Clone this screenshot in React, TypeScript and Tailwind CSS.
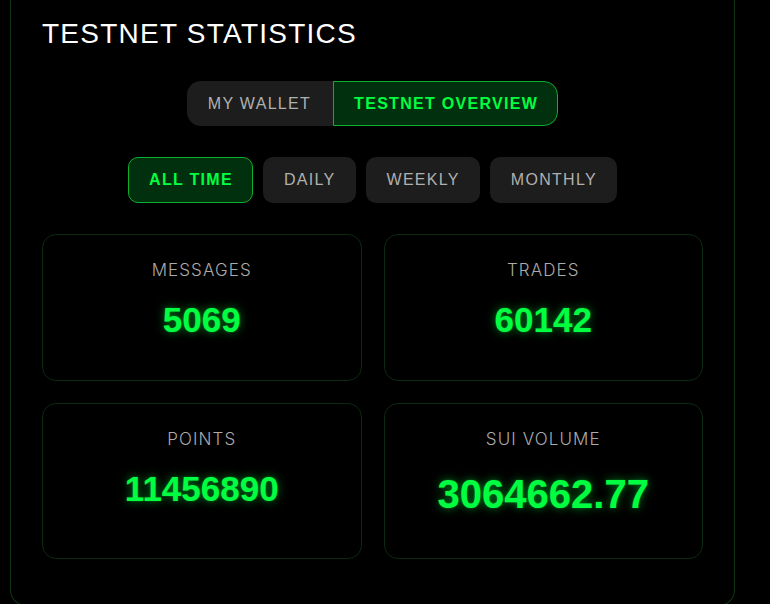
import React from "react";

const glow = { textShadow: "0 0 10px rgba(0,255,65,0.5), 0 0 2px rgba(0,255,65,0.35)" };

function Card({ label, value, big }: { label: string; value: string; big?: boolean }) {
  return (
    <div className="flex flex-col items-center rounded-[14px] border border-[#0b2a11] bg-black pt-[23px] pb-[39px]">
      <div className="text-[17px] leading-[24px] font-light tracking-[1.1px] text-[#ababab] [font-family:Inter,'Noto_Sans',sans-serif]">
        {label}
      </div>
      <div
        className={
          "font-bold text-[#00ff41] [font-family:'Liberation_Sans',Arial,sans-serif] " +
          (big ? "mt-[18px] text-[40px] leading-[50px]" : "mt-[17px] text-[35px] leading-[42px]")
        }
        style={glow}
      >
        {value}
      </div>
    </div>
  );
}

export default function App() {
  return (
    <div className="min-h-[604px] w-[770px] bg-black [font-family:'Liberation_Sans',Arial,sans-serif]">
      <div className="ml-[10px] w-[725px] rounded-b-[16px] border border-t-0 border-[#0d3514] bg-black px-[31px] pt-[17px] pb-[46px]">
        <h1 className="text-[28px] leading-[34px] tracking-[1.25px] text-white">TESTNET STATISTICS</h1>

        <div className="mt-[30px] flex justify-center">
          <div className="flex h-[45px] overflow-hidden rounded-[14px] bg-[#1c1d1c]">
            <button className="flex items-center pl-[21px] pr-[22px] text-[16px] tracking-[1.3px] text-[#b0b0b0]">
              MY WALLET
            </button>
            <button className="flex items-center rounded-r-[14px] border border-[#0fae2c] bg-[#00300d] pl-[20px] pr-[19px] text-[16px] font-bold tracking-[1.3px] text-[#00ff41]">
              TESTNET OVERVIEW
            </button>
          </div>
        </div>

        <div className="mt-[31px] flex justify-center gap-[10px]">
          <button className="flex h-[46px] items-center rounded-[10px] border border-[#0fae2c] bg-[#00300d] pl-[20px] pr-[19px] text-[16px] font-bold tracking-[1.3px] text-[#00ff41]">
            ALL TIME
          </button>
          {["DAILY", "WEEKLY", "MONTHLY"].map((t) => (
            <button
              key={t}
              className="flex h-[46px] items-center rounded-[10px] bg-[#1c1d1c] pl-[21px] pr-[20px] text-[16px] tracking-[1.3px] text-[#b0b0b0]"
            >
              {t}
            </button>
          ))}
        </div>

        <div className="mt-[31px] grid grid-cols-2 gap-[22px]">
          <Card label="MESSAGES" value="5069" />
          <Card label="TRADES" value="60142" />
          <Card label="POINTS" value="11456890" />
          <Card label="SUI VOLUME" value="3064662.77" big />
        </div>
      </div>
    </div>
  );
}
